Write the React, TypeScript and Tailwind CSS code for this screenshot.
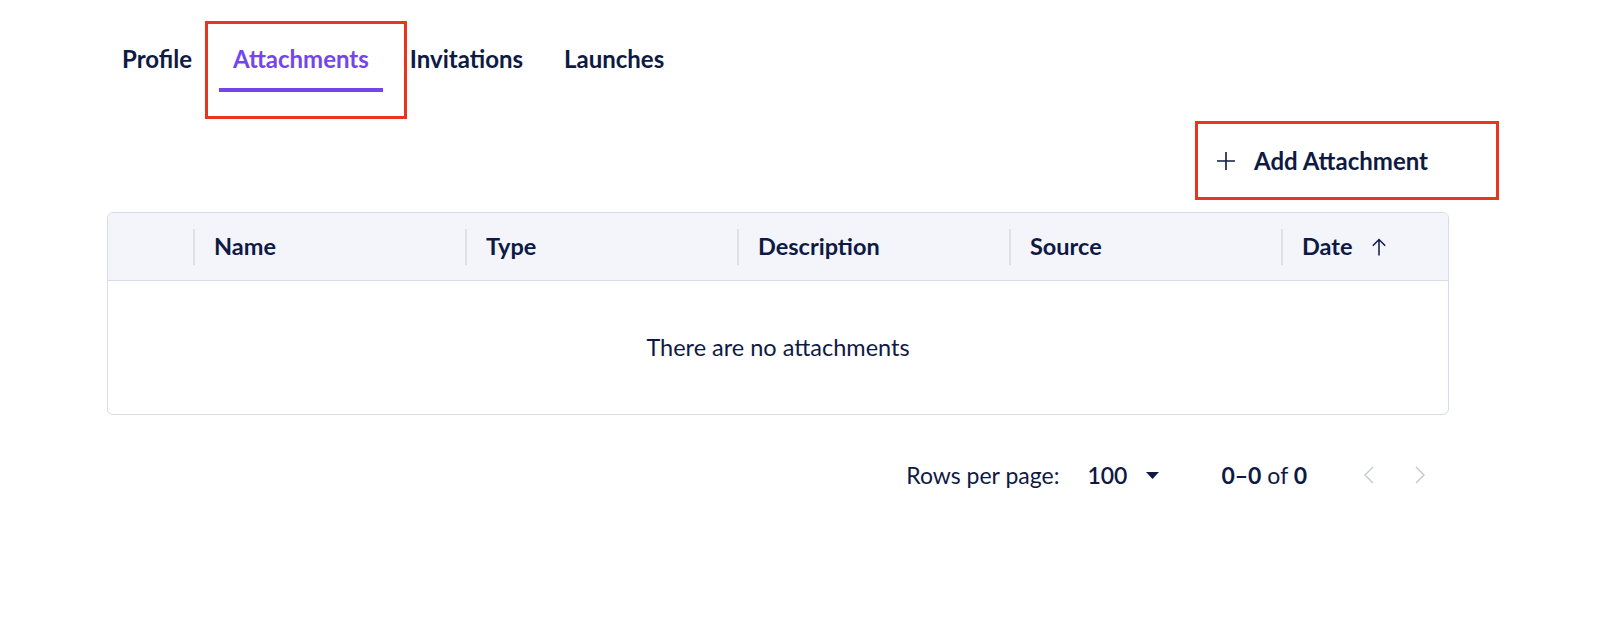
import React from 'react'

const navy = 'text-[#0f1a44]'

const tabs = ['Profile', 'Attachments', 'Invitations', 'Launches']
const columns = ['Name', 'Type', 'Description', 'Source']

function Tabs() {
  return (
    <div className="relative flex gap-[13px] pt-[43px] pl-[1px]">
      {tabs.map((t) => {
        const active = t === 'Attachments'
        return (
          <div key={t} className="flex flex-col items-stretch">
            <div
              className={`px-[14px] text-[24px] leading-[32px] font-bold ${
                active ? 'text-[#7446ea]' : navy
              }`}
            >
              {t}
            </div>
            <div className={`mt-[13px] h-[4px] ${active ? 'bg-[#7446ea]' : 'bg-transparent'}`} />
          </div>
        )
      })}
      {/* annotation box */}
      <div className="absolute left-[98px] top-[21px] w-[202px] h-[98px] border-[3px] border-[#e8361e] pointer-events-none" />
    </div>
  )
}

function AddButton() {
  return (
    <div className="relative flex justify-end mt-[39px]">
      <button className={`flex items-center gap-[19px] h-[60px] pl-[22px] pr-[21px] text-[24px] leading-[32px] font-bold ${navy}`}>
        <svg width="18" height="18" viewBox="0 0 18 18" fill="none" stroke="#0f1a44" strokeWidth="1.6">
          <path d="M9 0v18M0 9h18" />
        </svg>
        Add Attachment
      </button>
      <div className="absolute right-[-50px] top-[-10px] w-[304px] h-[79px] border-[3px] border-[#e8361e] pointer-events-none" />
    </div>
  )
}

function Table() {
  return (
    <div className="mt-[21px] rounded-[6px] border border-[#d8dce8] overflow-hidden">
      <div className="flex h-[68px] bg-[#f3f5fa] border-b border-[#d8dce8] items-center">
        <div className="w-[85px] shrink-0" />
        {columns.map((c) => (
          <div key={c} className="w-[272px] shrink-0 flex items-center h-[36px] border-l-2 border-[#dde1ea] pl-[19px]">
            <span className={`text-[23.5px] font-bold ${navy}`}>{c}</span>
          </div>
        ))}
        <div className="flex-1 flex items-center h-[36px] border-l-2 border-[#dde1ea] pl-[19px]">
          <span className={`text-[23.5px] font-bold ${navy}`}>Date</span>
          <svg className="ml-[19px]" width="14" height="18" viewBox="0 0 14 18" fill="none" stroke="#0f1a44" strokeWidth="1.5">
            <path d="M7 17.5V1.5M0.8 7.7L7 1.5l6.2 6.2" />
          </svg>
        </div>
      </div>
      <div className={`h-[133px] flex items-center justify-center text-[23.5px] ${navy}`}>
        There are no attachments
      </div>
    </div>
  )
}

function Pagination() {
  return (
    <div className={`flex items-center justify-end mt-[44px] h-[32px] text-[23px] ${navy}`}>
      <span>Rows per page:</span>
      <span className="ml-[28px] font-semibold">100</span>
      <svg className="ml-[19px]" width="13" height="7" viewBox="0 0 13 7" fill="#0f1a44">
        <path d="M0 0h13L6.5 7z" />
      </svg>
      <span className="ml-[62px]">
        <b>0–0</b> of <b>0</b>
      </span>
      <svg className="ml-[57px]" width="10" height="18" viewBox="0 0 10 18" fill="none" stroke="#c3c7d2" strokeWidth="1.4">
        <path d="M9 1L1 9l8 8" />
      </svg>
      <svg className="ml-[41px] mr-[24px]" width="10" height="18" viewBox="0 0 10 18" fill="none" stroke="#c3c7d2" strokeWidth="1.4">
        <path d="M1 1l8 8-8 8" />
      </svg>
    </div>
  )
}

export default function App() {
  return (
    <div className="min-h-[618px] bg-white font-['Lato',sans-serif]">
      <div className="ml-[107px] w-[1342px]">
        <Tabs />
        <AddButton />
        <Table />
        <Pagination />
      </div>
    </div>
  )
}
